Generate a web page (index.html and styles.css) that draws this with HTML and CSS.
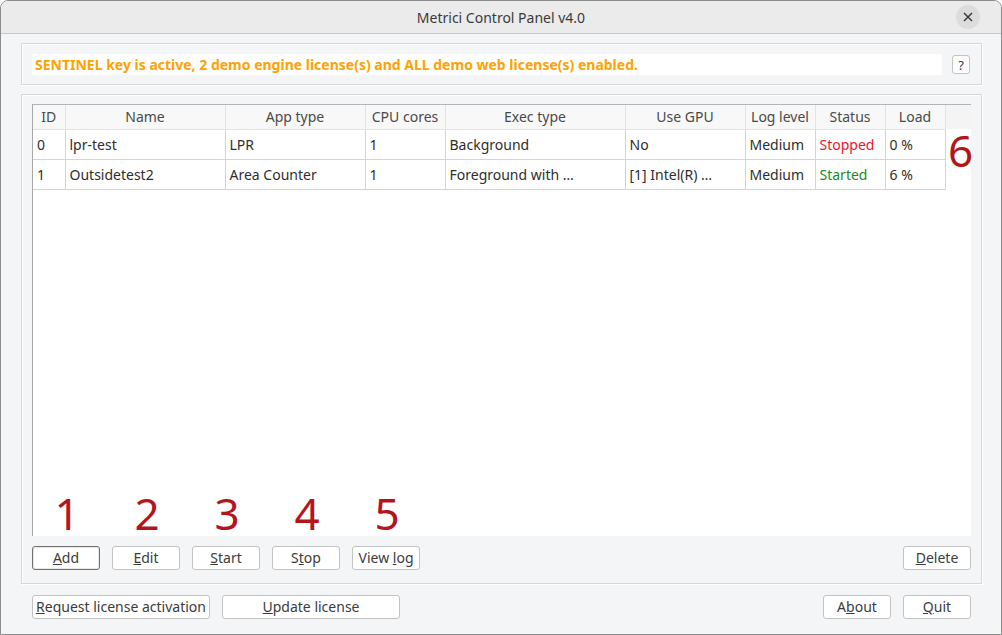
FILE: index.html
```html
<!DOCTYPE html>
<html lang="en">
<head>
    <meta charset="UTF-8">
    <title>Metrici Control Panel v4.0</title>
    <link rel="stylesheet" href="styles.css">
</head>
<body>
    <div class="window">
        <div class="titlebar">
            <span class="title">Metrici Control Panel v4.0</span>
            <button class="close" type="button">
                <svg width="10" height="10" viewBox="0 0 10 10"><path d="M1 1L9 9M9 1L1 9" stroke="#333" stroke-width="1.4"/></svg>
            </button>
        </div>

        <div class="content">
            <div class="group status-group">
                <div class="status-field">SENTINEL key is active, 2 demo engine license(s) and ALL demo web license(s) enabled.</div>
                <button class="btn help" type="button">?</button>
            </div>

            <div class="group apps-group">
                <div class="table-view">
                    <div class="header-row">
                        <table class="apps">
                            <colgroup>
                                <col style="width:32px"><col style="width:160px"><col style="width:140px">
                                <col style="width:80px"><col style="width:180px"><col style="width:120px">
                                <col style="width:70px"><col style="width:70px"><col style="width:60px">
                            </colgroup>
                            <thead>
                                <tr>
                                    <th>ID</th><th>Name</th><th>App type</th><th>CPU cores</th><th>Exec type</th>
                                    <th>Use GPU</th><th>Log level</th><th>Status</th><th>Load</th>
                                </tr>
                            </thead>
                            <tbody>
                                <tr>
                                    <td>0</td><td>lpr-test</td><td>LPR</td><td>1</td><td>Background</td>
                                    <td>No</td><td>Medium</td><td class="stopped">Stopped</td><td>0 %</td>
                                </tr>
                                <tr>
                                    <td>1</td><td>Outsidetest2</td><td>Area Counter</td><td>1</td><td>Foreground with …</td>
                                    <td>[1] Intel(R) …</td><td>Medium</td><td class="started">Started</td><td>6 %</td>
                                </tr>
                            </tbody>
                        </table>
                        <span class="marker marker-six">6</span>
                    </div>
                    <div class="markers">
                        <span class="marker">1</span>
                        <span class="marker">2</span>
                        <span class="marker">3</span>
                        <span class="marker">4</span>
                        <span class="marker">5</span>
                    </div>
                </div>

                <div class="button-row">
                    <button class="btn default" type="button"><u>A</u>dd</button>
                    <button class="btn" type="button"><u>E</u>dit</button>
                    <button class="btn" type="button"><u>S</u>tart</button>
                    <button class="btn" type="button">S<u>t</u>op</button>
                    <button class="btn" type="button">View <u>l</u>og</button>
                    <span class="spacer"></span>
                    <button class="btn" type="button"><u>D</u>elete</button>
                </div>
            </div>

            <div class="button-row bottom-row">
                <button class="btn wide" type="button"><u>R</u>equest license activation</button>
                <button class="btn wide" type="button"><u>U</u>pdate license</button>
                <span class="spacer"></span>
                <button class="btn" type="button">A<u>b</u>out</button>
                <button class="btn" type="button"><u>Q</u>uit</button>
            </div>
        </div>
    </div>
</body>
</html>
```

FILE: styles.css
```css
body {
    margin: 0;
    font-family: 'Noto Sans', sans-serif;
    font-size: 14px;
    color: #3c3c3c;
    background: #fff;
}

.window {
    width: 1002px;
    height: 635px;
    box-sizing: border-box;
    border: 1px solid #8c8c8c;
    border-radius: 8px 8px 0 0;
    background: #f4f5f6;
    overflow: hidden;
}

.titlebar {
    height: 32px;
    background: #ebebeb;
    border-bottom: 1px solid #c9c9c9;
    position: relative;
    display: flex;
    justify-content: center;
    align-items: center;
}

.title {
    color: #3a3a3a;
}

.close {
    position: absolute;
    right: 21px;
    top: 4px;
    width: 24px;
    height: 24px;
    border: none;
    border-radius: 50%;
    background: #dcdcdc;
    padding: 0;
    display: flex;
    align-items: center;
    justify-content: center;
}

.content {
    padding: 9px 19px 0 20px;
}

.group {
    border: 1px solid #d6d7d9;
    box-shadow: inset 1px 1px 0 #fff, 1px 1px 0 #fff;
}

.status-group {
    height: 42px;
    box-sizing: border-box;
    padding: 10px 11px 0 10px;
    display: flex;
    align-items: flex-start;
    gap: 10px;
    margin-bottom: 9px;
}

.status-field {
    flex: 1;
    height: 21px;
    line-height: 21px;
    background: #fff;
    color: #ffa200;
    font-weight: bold;
    padding-left: 3px;
}

.btn {
    font-family: 'Noto Sans', sans-serif;
    font-size: 14px;
    color: #3c3c3c;
    background: #fff;
    border: 1px solid #c3c3c3;
    border-radius: 3px;
    width: 68px;
    height: 24px;
    padding: 0;
    line-height: 20px;
}

.btn.help {
    width: 18px;
    height: 19px;
    margin-top: 1px;
    line-height: 16px;
    font-size: 13px;
}

.btn.default {
    border-color: #707070;
    box-shadow: inset 0 0 0 1px #e8e8e8;
}

.btn.wide {
    width: 178px;
}

.apps-group {
    height: 490px;
    box-sizing: border-box;
    padding: 9px 10px 0 10px;
}

.table-view {
    height: 431px;
    background: #fff;
    border-left: 1px solid #a8a8a8;
    border-top: 1px solid #b4b4b4;
    display: flex;
    flex-direction: column;
    justify-content: space-between;
}

.header-row {
    position: relative;
    background: linear-gradient(#f4f4f4 0, #f4f4f4 24px, #fff 24px);
}

.apps {
    border-collapse: collapse;
    table-layout: fixed;
    width: 912px;
}

.apps th {
    height: 24px;
    padding: 0;
    font-weight: normal;
    color: #4a4a4a;
    background: #f8f8f8;
    border-right: 1px solid #e3e3e3;
    border-bottom: 1px solid #e3e3e3;
    box-sizing: border-box;
}

.apps td {
    height: 30px;
    padding: 0 0 0 4px;
    color: #2e2e2e;
    border: 1px solid #d4d4d4;
    border-top: none;
    white-space: nowrap;
    overflow: hidden;
    box-sizing: border-box;
}

.apps td:first-child {
    border-left: none;
}

.stopped {
    color: #f0142c !important;
}

.started {
    color: #1d8a1d !important;
}

.marker {
    font-size: 44px;
    line-height: 40px;
    color: #b2161c;
}

.marker-six {
    position: absolute;
    left: 915px;
    top: 25px;
}

.markers {
    display: flex;
    gap: 12px;
    padding-bottom: 3px;
}

.markers .marker {
    width: 68px;
    text-align: center;
}

.button-row {
    display: flex;
    gap: 12px;
    margin-top: 10px;
}

.spacer {
    flex: 1;
}

.bottom-row {
    margin-top: 11px;
    padding: 0 11px 0 11px;
}
```
